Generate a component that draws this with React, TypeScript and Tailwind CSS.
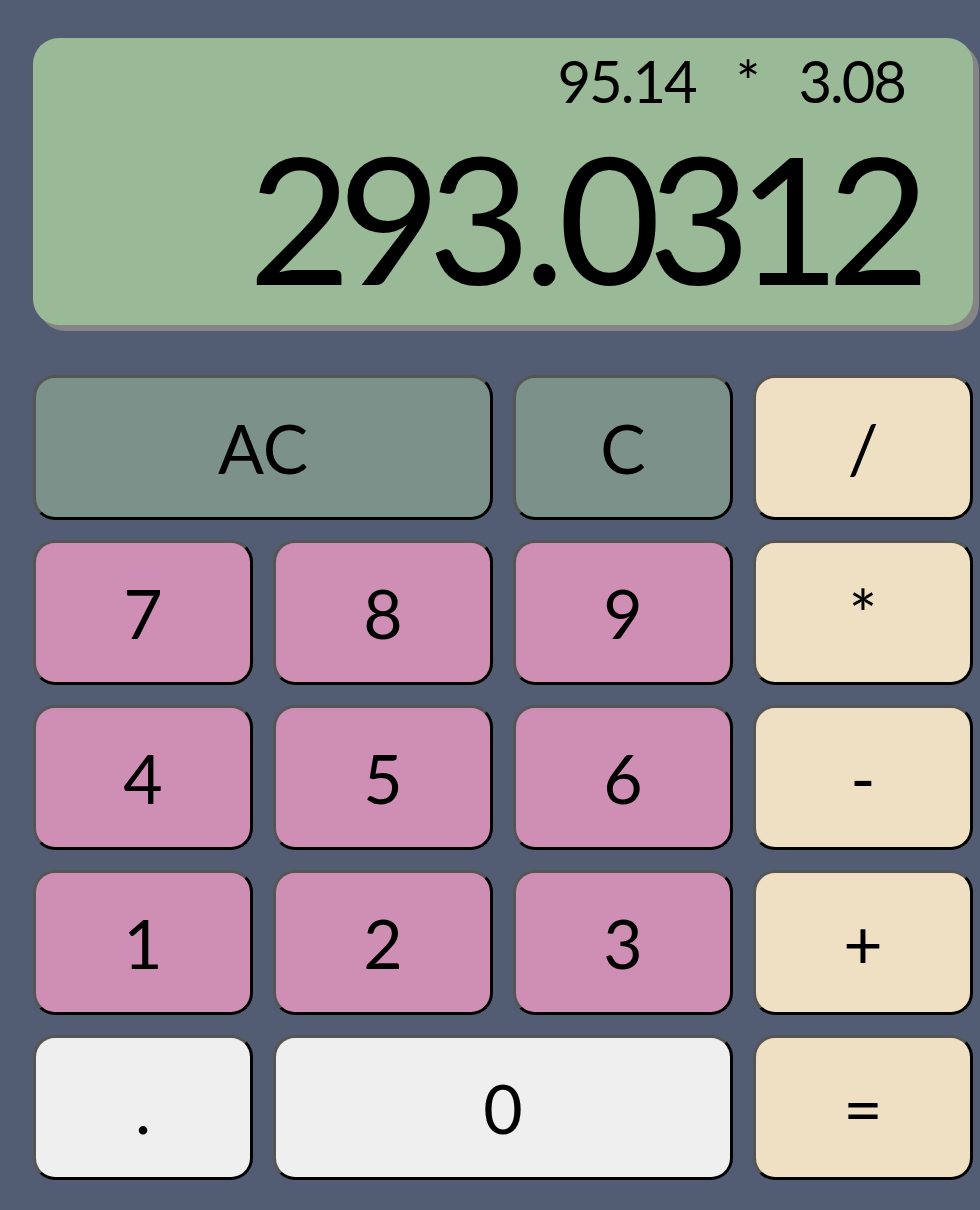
import React from 'react';

type Key = {
  label: string;
  kind: 'clear' | 'digit' | 'op' | 'light';
  wide?: boolean;
};

const keys: Key[] = [
  { label: 'AC', kind: 'clear', wide: true },
  { label: 'C', kind: 'clear' },
  { label: '/', kind: 'op' },
  { label: '7', kind: 'digit' },
  { label: '8', kind: 'digit' },
  { label: '9', kind: 'digit' },
  { label: '*', kind: 'op' },
  { label: '4', kind: 'digit' },
  { label: '5', kind: 'digit' },
  { label: '6', kind: 'digit' },
  { label: '-', kind: 'op' },
  { label: '1', kind: 'digit' },
  { label: '2', kind: 'digit' },
  { label: '3', kind: 'digit' },
  { label: '+', kind: 'op' },
  { label: '.', kind: 'light' },
  { label: '0', kind: 'light', wide: true },
  { label: '=', kind: 'op' },
];

const kindClass = {
  clear: 'bg-[#7b9189]',
  digit: 'bg-[#cf8fb5]',
  op: 'bg-[#efdfc3]',
  light: 'bg-[#efefef]',
};

const App = () => {
  return (
    <div className="min-h-[1210px] w-[980px] overflow-hidden bg-[#525d73] pl-[33px] pt-[38px] font-['Lato','Open_Sans',sans-serif] text-black">
      <div className="flex h-[287px] w-[940px] flex-col items-end rounded-[26px] bg-[#9ab997] shadow-[6px_6px_0_#858585]">
        <div className="mt-[14px] mr-[68px] flex gap-[40px] text-[58px] leading-none tracking-[-2px]">
          <span>95.14</span>
          <span>*</span>
          <span>3.08</span>
        </div>
        <div className="mt-[18px] mr-[56px] flex text-[177px] leading-none tracking-[-13px]">
          <span>293</span>
          <span className="mx-[6px]">.</span>
          <span>0312</span>
        </div>
      </div>

      <div className="mt-[50px] grid w-[940px] grid-cols-[repeat(4,220px)] auto-rows-[145px] gap-x-[20px] gap-y-[20px]">
        {keys.map(key => (
          <button
            key={key.label}
            className={`${kindClass[key.kind]} ${key.wide ? 'col-span-2' : ''} flex items-center justify-center rounded-[22px] border-[3px] border-t-[#555555] border-l-[#555555] border-r-black border-b-black text-[68px] leading-none`}
          >
            {key.label}
          </button>
        ))}
      </div>
    </div>
  );
};

export default App;
